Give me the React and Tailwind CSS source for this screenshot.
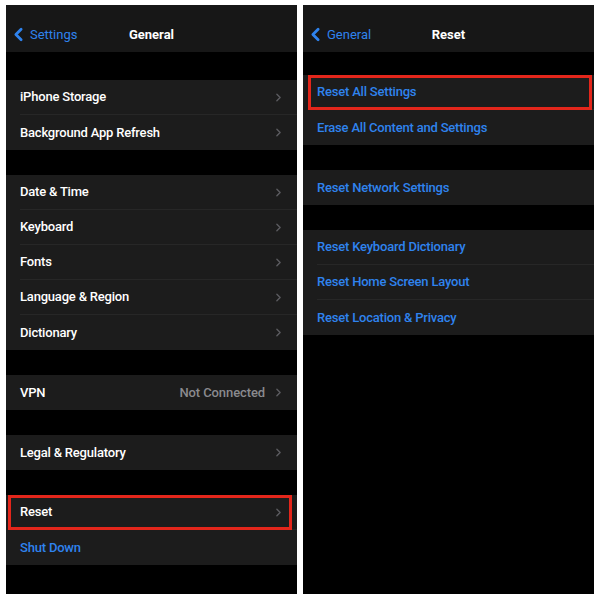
import { ChevronLeft, ChevronRight } from 'lucide-react';

const font = { fontFamily: 'Roboto, "Noto Sans", sans-serif' };

function NavBar({ back, title }) {
  return (
    <div className="relative h-[47px] bg-[#171717] flex items-center pt-[12px] shrink-0">
      <div className="flex items-center pl-[2px] text-[#2f83ee] text-[13px]">
        <ChevronLeft className="w-[21px] h-[23px]" strokeWidth={3.2} />
        <span className="ml-[1px]">{back}</span>
      </div>
      <div className="absolute inset-0 pt-[12px] flex items-center justify-center text-white text-[13px] font-bold pointer-events-none">
        {title}
      </div>
    </div>
  );
}

function Row({ label, blue, value, chevron = true, last, marked, markLeft }) {
  return (
    <div className="relative h-[35px] bg-[#1c1c1c] flex pl-[14px]">
      <div
        className={`flex-1 flex items-center pr-[12px] ${last ? '' : 'border-b border-[#272727]'}`}
      >
        <span className={`flex-1 text-[13px] font-medium tracking-[-0.2px] ${blue ? 'text-[#2f83ee]' : 'text-white'}`}>
          {label}
        </span>
        {value && <span className="text-[13px] font-medium tracking-[-0.1px] text-[#8a8a8e] mr-[7px]">{value}</span>}
        {chevron && <ChevronRight className="w-[13px] h-[13px] text-[#5c5c60]" strokeWidth={2.5} />}
      </div>
      {marked && (
        <div
          className={`absolute top-0 h-[35px] w-[284px] border-[3px] border-[#e3261b] ${markLeft}`}
        />
      )}
    </div>
  );
}

function Group({ children, gap }) {
  return (
    <div className={`flex flex-col ${gap}`}>
      {children}
    </div>
  );
}

export default function App() {
  return (
    <div className="w-[600px] h-[600px] bg-white flex gap-[6px] pt-[5px] pl-[6px]" style={font}>
      {/* General */}
      <div className="w-[291px] h-[589px] bg-black flex flex-col">
        <NavBar back="Settings" title="General" />
        <Group gap="mt-[28px]">
          <Row label="iPhone Storage" />
          <Row label="Background App Refresh" last />
        </Group>
        <Group gap="mt-[25px]">
          <Row label="Date & Time" />
          <Row label="Keyboard" />
          <Row label="Fonts" />
          <Row label="Language & Region" />
          <Row label="Dictionary" last />
        </Group>
        <Group gap="mt-[25px]">
          <Row label="VPN" value="Not Connected" last />
        </Group>
        <Group gap="mt-[25px]">
          <Row label="Legal & Regulatory" last />
        </Group>
        <Group gap="mt-[25px]">
          <Row label="Reset" marked markLeft="left-[2px]" />
          <Row label="Shut Down" blue chevron={false} last />
        </Group>
      </div>

      {/* Reset */}
      <div className="w-[291px] h-[589px] bg-black flex flex-col">
        <NavBar back="General" title="Reset" />
        <Group gap="mt-[23px]">
          <Row label="Reset All Settings" blue chevron={false} marked markLeft="left-[5px]" />
          <Row label="Erase All Content and Settings" blue chevron={false} last />
        </Group>
        <Group gap="mt-[25px]">
          <Row label="Reset Network Settings" blue chevron={false} last />
        </Group>
        <Group gap="mt-[25px]">
          <Row label="Reset Keyboard Dictionary" blue chevron={false} />
          <Row label="Reset Home Screen Layout" blue chevron={false} />
          <Row label="Reset Location & Privacy" blue chevron={false} last />
        </Group>
      </div>
    </div>
  );
}
